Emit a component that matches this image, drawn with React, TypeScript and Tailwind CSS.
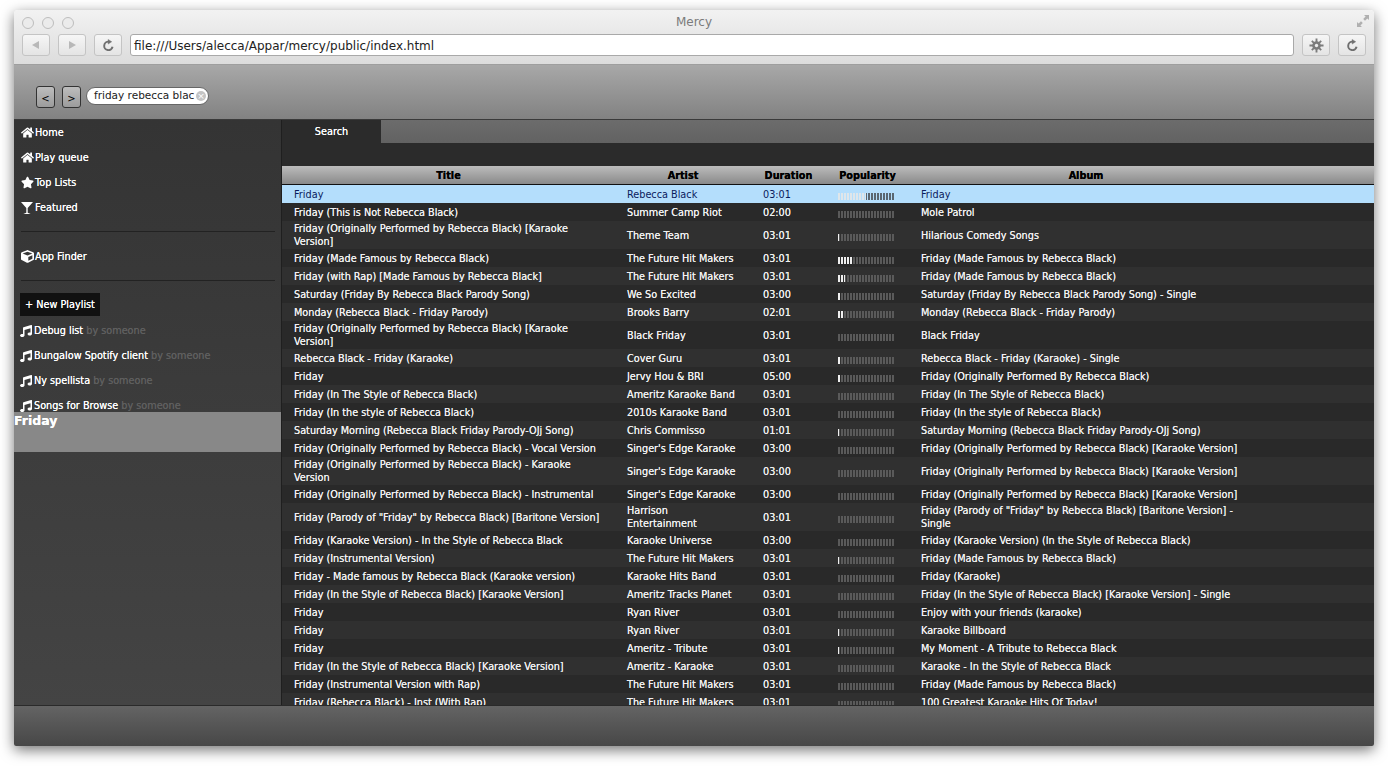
import React from 'react';
import { FaHome, FaStar, FaCube, FaMusic } from 'react-icons/fa';

type Track = [string, string, string, number, string];

const tracks: Track[] = [
  ['Friday', 'Rebecca Black', '03:01', 9.5, 'Friday'],
  ['Friday (This is Not Rebecca Black)', 'Summer Camp Riot', '02:00', 0, 'Mole Patrol'],
  ['Friday (Originally Performed by Rebecca Black) [Karaoke Version]', 'Theme Team', '03:01', 0.5, 'Hilarious Comedy Songs'],
  ['Friday (Made Famous by Rebecca Black)', 'The Future Hit Makers', '03:01', 5, 'Friday (Made Famous by Rebecca Black)'],
  ['Friday (with Rap) [Made Famous by Rebecca Black]', 'The Future Hit Makers', '03:01', 2.5, 'Friday (Made Famous by Rebecca Black)'],
  ['Saturday (Friday By Rebecca Black Parody Song)', 'We So Excited', '03:00', 1, 'Saturday (Friday By Rebecca Black Parody Song) - Single'],
  ['Monday (Rebecca Black - Friday Parody)', 'Brooks Barry', '02:01', 2, 'Monday (Rebecca Black - Friday Parody)'],
  ['Friday (Originally Performed by Rebecca Black) [Karaoke Version]', 'Black Friday', '03:01', 0, 'Black Friday'],
  ['Rebecca Black - Friday (Karaoke)', 'Cover Guru', '03:01', 1, 'Rebecca Black - Friday (Karaoke) - Single'],
  ['Friday', 'Jervy Hou & BRI', '05:00', 1, 'Friday (Originally Performed By Rebecca Black)'],
  ['Friday (In The Style of Rebecca Black)', 'Ameritz Karaoke Band', '03:01', 0, 'Friday (In The Style of Rebecca Black)'],
  ['Friday (In the style of Rebecca Black)', '2010s Karaoke Band', '03:01', 0, 'Friday (In the style of Rebecca Black)'],
  ['Saturday Morning (Rebecca Black Friday Parody-OJj Song)', 'Chris Commisso', '01:01', 0.5, 'Saturday Morning (Rebecca Black Friday Parody-OJj Song)'],
  ['Friday (Originally Performed by Rebecca Black) - Vocal Version', "Singer's Edge Karaoke", '03:00', 0, 'Friday (Originally Performed by Rebecca Black) [Karaoke Version]'],
  ['Friday (Originally Performed by Rebecca Black) - Karaoke Version', "Singer's Edge Karaoke", '03:00', 0, 'Friday (Originally Performed by Rebecca Black) [Karaoke Version]'],
  ['Friday (Originally Performed by Rebecca Black) - Instrumental', "Singer's Edge Karaoke", '03:00', 0, 'Friday (Originally Performed by Rebecca Black) [Karaoke Version]'],
  ['Friday (Parody of "Friday" by Rebecca Black) [Baritone Version]', 'Harrison Entertainment', '03:01', 0, 'Friday (Parody of "Friday" by Rebecca Black) [Baritone Version] - Single'],
  ['Friday (Karaoke Version) - In the Style of Rebecca Black', 'Karaoke Universe', '03:00', 0, 'Friday (Karaoke Version) (In the Style of Rebecca Black)'],
  ['Friday (Instrumental Version)', 'The Future Hit Makers', '03:01', 0.5, 'Friday (Made Famous by Rebecca Black)'],
  ['Friday - Made famous by Rebecca Black (Karaoke version)', 'Karaoke Hits Band', '03:01', 0, 'Friday (Karaoke)'],
  ['Friday (In the Style of Rebecca Black) [Karaoke Version]', 'Ameritz Tracks Planet', '03:01', 0, 'Friday (In the Style of Rebecca Black) [Karaoke Version] - Single'],
  ['Friday', 'Ryan River', '03:01', 0, 'Enjoy with your friends (karaoke)'],
  ['Friday', 'Ryan River', '03:01', 0.5, 'Karaoke Billboard'],
  ['Friday', 'Ameritz - Tribute', '03:01', 0.5, 'My Moment - A Tribute to Rebecca Black'],
  ['Friday (In the Style of Rebecca Black) [Karaoke Version]', 'Ameritz - Karaoke', '03:01', 0, 'Karaoke - In the Style of Rebecca Black'],
  ['Friday (Instrumental Version with Rap)', 'The Future Hit Makers', '03:01', 0, 'Friday (Made Famous by Rebecca Black)'],
  ['Friday (Rebecca Black) - Inst (With Rap)', 'The Future Hit Makers', '03:01', 0, '100 Greatest Karaoke Hits Of Today!'],
];

const cols = 'grid grid-cols-[333px_136px_75px_83px_354px_1fr]';

const Popularity = ({ value, selected }: { value: number; selected: boolean }) => (
  <div className="mt-[5px] flex h-[7px] gap-px">
    {Array.from({ length: 19 }).map((_, i) => {
      const fill = Math.max(0, Math.min(1, value - i));
      return (
        <span key={i} className={'h-full w-[2px] ' + (selected ? 'bg-[#5a6670]' : 'bg-[#5a5a5a]')}>
          <span className={'block h-full ' + (selected ? 'bg-[#dfe6ea]' : 'bg-[#efefef]')} style={{ width: fill * 2 }} />
        </span>
      );
    })}
  </div>
);

const Row = ({ track, index }: { track: Track; index: number }) => {
  const selected = index === 0;
  const base = selected
    ? 'bg-[#b4defc] text-[#0a1a5c] [text-shadow:none]'
    : index % 2 === 1
      ? 'bg-[#292929] text-[#f0f0f0]'
      : 'bg-[#303030] text-[#f0f0f0]';
  return (
    <div className={cols + ' min-h-[18px] items-center leading-[13px] [&>div]:py-[1px] ' + base}>
      <div className="pr-[8px] pl-[12px]">{track[0]}</div>
      <div className="pr-[14px] pl-[12px]">{track[1]}</div>
      <div className="pl-[12px]">{track[2]}</div>
      <div className="pl-[12px]">
        <Popularity value={track[3]} selected={selected} />
      </div>
      <div className="pr-[20px] pl-[12px]">{track[4]}</div>
      <div />
    </div>
  );
};

const NavItem = ({ icon, label }: { icon: React.ReactNode; label: string }) => (
  <div className="flex h-[25px] items-center gap-[1px] pl-[6px] text-white">
    <span className="flex w-[14px] justify-center text-[13px]">{icon}</span>
    <span className="pt-[1px]">{label}</span>
  </div>
);

const PlaylistItem = ({ label }: { label: string }) => (
  <div className="flex h-[25px] items-center gap-[2px] pl-[6px] whitespace-nowrap text-white">
    <FaMusic className="text-[12px]" />
    <span className="pt-[2px]">
      {label} <span className="text-[#5f5f5f]">by someone</span>
    </span>
  </div>
);

const ChromeButton = ({ children }: { children: React.ReactNode }) => (
  <div className="flex h-[22px] w-[28px] items-center justify-center rounded-[3px] border border-[#c4c4c4] bg-gradient-to-b from-[#f6f6f6] to-[#e4e4e4] text-[#9a9a9a]">
    {children}
  </div>
);

const Reload = () => (
  <svg viewBox="0 0 16 16" className="h-[13px] w-[13px]" fill="none" stroke="#6f6f6f" strokeWidth="2.4">
    <path d="M13 9.5A5.2 5.2 0 1 1 8.5 3.3" />
    <path d="M7.5 0.5 12 3.4 7.5 6.3Z" fill="#6f6f6f" strokeWidth="0.5" />
  </svg>
);

export default function App() {
  return (
    <div className="h-[766px] w-[1388px] overflow-hidden bg-white px-[14px] pt-[10px] font-['DejaVu_Sans',sans-serif]">
      <div className="flex h-[736px] flex-col rounded-t-[4px] rounded-b-[2px] shadow-[0_4px_14px_rgba(0,0,0,0.55)]">
        {/* browser chrome */}
        <div className="flex h-[55px] shrink-0 flex-col rounded-t-[4px] border-b border-[#9e9e9e] bg-gradient-to-b from-[#f2f2f2] to-[#dcdcdc]">
          <div className="relative flex h-[24px] items-center px-[8px] pt-[1px]">
            <div className="flex gap-[8px]">
              <span className="h-[12px] w-[12px] rounded-full border border-[#bdbdbd] bg-[#ebebeb]" />
              <span className="h-[12px] w-[12px] rounded-full border border-[#bdbdbd] bg-[#ebebeb]" />
              <span className="h-[12px] w-[12px] rounded-full border border-[#bdbdbd] bg-[#ebebeb]" />
            </div>
            <div className="flex-1 pr-[52px] pb-[2px] text-center text-[12px] text-[#7b7b7b]">Mercy</div>
            <svg viewBox="0 0 14 14" className="absolute top-[4px] right-[4px] h-[14px] w-[14px]" fill="#b0b0b0">
              <path d="M8 1h5v5L11.4 4.4 9 6.8 7.2 5 9.6 2.6Z" />
              <path d="M1 8v5h5L4.4 11.4 6.8 9 5 7.2 2.6 9.6Z" />
            </svg>
          </div>
          <div className="flex h-[22px] items-center pr-[8px] pl-[8px]">
            <ChromeButton>
              <svg viewBox="0 0 10 10" className="h-[10px] w-[10px]" fill="#b8b8b8"><path d="M1 5 8 1v8Z" /></svg>
            </ChromeButton>
            <div className="ml-[8px]">
              <ChromeButton>
                <svg viewBox="0 0 10 10" className="h-[10px] w-[10px]" fill="#b8b8b8"><path d="M9 5 2 1v8Z" /></svg>
              </ChromeButton>
            </div>
            <div className="ml-[8px]">
              <ChromeButton><Reload /></ChromeButton>
            </div>
            <div className="mx-[8px] flex h-[22px] flex-1 items-center rounded-[3px] border border-[#a9a9a9] bg-white pt-[1px] pl-[3px] text-[12px] text-[#222]">
              file:///Users/alecca/Appar/mercy/public/index.html
            </div>
            <ChromeButton>
              <svg viewBox="0 0 16 16" className="h-[15px] w-[15px]" fill="#7c7c7c">
                <circle cx="8" cy="8" r="4.6" />
                <path d="M7 0.5h2V15.5H7zM0.5 7H15.5v2H0.5zM2.3 3.7l1.4-1.4 10 10-1.4 1.4zM12.3 2.3l1.4 1.4-10 10-1.4-1.4z" />
                <circle cx="8" cy="8" r="1.8" fill="#eeeeee" />
              </svg>
            </ChromeButton>
            <div className="ml-[8px]">
              <ChromeButton><Reload /></ChromeButton>
            </div>
          </div>
        </div>

        {/* app toolbar */}
        <div className="flex h-[55px] shrink-0 items-end border-b border-[#3a3a3a] bg-gradient-to-b from-[#a8a8a8] to-[#828282] pb-[11px] pl-[22px]">
          <button className="flex h-[22px] w-[19px] items-center justify-center rounded-[3px] border border-[#333] bg-gradient-to-b from-[#bdbdbd] to-[#9c9c9c] pt-[2px] text-[10px] text-black">&lt;</button>
          <button className="ml-[7px] flex h-[22px] w-[19px] items-center justify-center rounded-[3px] border border-[#333] bg-gradient-to-b from-[#bdbdbd] to-[#9c9c9c] pt-[2px] text-[10px] text-black">&gt;</button>
          <div className="relative mb-[3px] ml-[5px] flex h-[18px] w-[123px] items-center overflow-hidden rounded-full border border-[#666] bg-white pl-[7px] text-[10.5px] whitespace-nowrap text-[#222]">
            friday rebecca blac
            <span className="absolute top-[3px] right-[2px] flex h-[10px] w-[10px] items-center justify-center rounded-full bg-[#c4c4c4] text-[9px] leading-none text-white">×</span>
          </div>
        </div>

        {/* body */}
        <div className="flex min-h-0 flex-1 text-[9.7px] [text-shadow:0_0_0.5px_currentColor]">
          <aside className="flex w-[268px] shrink-0 flex-col border-r border-[#1f1f1f] bg-gradient-to-b from-[#343434] to-[#444444]">
            <div className="pb-[11px]">
              <NavItem icon={<FaHome />} label="Home" />
              <NavItem icon={<FaHome />} label="Play queue" />
              <NavItem icon={<FaStar />} label="Top Lists" />
              <NavItem
                icon={
                  <svg viewBox="0 0 14 14" className="h-[14px] w-[14px]" fill="#ffffff">
                    <path d="M1 1h12L7.7 7v4.8l3 1.2H3.3l3-1.2V7Z" />
                  </svg>
                }
                label="Featured"
              />
            </div>
            <div className="mr-[6px] ml-[7px] border-t border-[#222]" />
            <div className="pt-[12px] pb-[11px]">
              <NavItem icon={<FaCube />} label="App Finder" />
            </div>
            <div className="mr-[6px] ml-[7px] border-t border-[#222]" />
            <div className="mt-[12px] ml-[6px] flex h-[23px] w-[80px] shrink-0 items-center justify-center bg-[#111] pt-[2px] text-white">+ New Playlist</div>
            <div className="h-[96px] shrink-0 overflow-hidden pt-[2px]">
              <PlaylistItem label="Debug list" />
              <PlaylistItem label="Bungalow Spotify client" />
              <PlaylistItem label="Ny spellista" />
              <PlaylistItem label="Songs for Browse" />
            </div>
            <div className="h-[40px] shrink-0 bg-[#888888] text-[12.5px] leading-[17px] font-bold text-white">Friday</div>
          </aside>

          <main className="flex min-w-0 flex-1 flex-col overflow-hidden bg-[#2b2b2b]">
            <div className="flex h-[23px] shrink-0 bg-gradient-to-b from-[#6c6c6c] to-[#626262]">
              <div className="flex w-[99px] items-center justify-center bg-[#2b2b2b] pt-[2px] text-white">Search</div>
            </div>
            <div className="h-[23px] shrink-0" />
            <div className={cols + ' h-[19px] shrink-0 items-center border-b border-[#111] bg-gradient-to-b from-[#bcbcbc] to-[#8a8a8a] pt-[3px] text-center font-bold text-black'}>
              <div>Title</div>
              <div>Artist</div>
              <div>Duration</div>
              <div>Popularity</div>
              <div>Album</div>
              <div />
            </div>
            <div className="min-h-0 flex-1 overflow-hidden">
              {tracks.map((t, i) => (
                <Row key={i} track={t} index={i} />
              ))}
            </div>
          </main>
        </div>

        {/* footer */}
        <div className="h-[41px] shrink-0 rounded-b-[2px] border-t border-[#2a2a2a] bg-gradient-to-b from-[#646464] to-[#474747]" />
      </div>
    </div>
  );
}
